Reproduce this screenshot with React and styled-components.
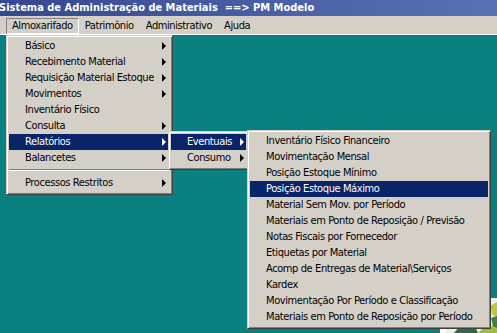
import React from 'react';
import styled, { createGlobalStyle } from 'styled-components';

const GlobalStyle = createGlobalStyle`
  html, body { margin: 0; padding: 0; background: #0b8080; overflow: hidden; }
  * { box-sizing: border-box; }
`;

const FONT = `"DejaVu Sans Condensed", "DejaVu Sans", "Liberation Sans", sans-serif`;

const Screen = styled.div`
  position: relative;
  width: 497px;
  height: 333px;
  background: #0b8080;
  overflow: hidden;
  font-family: ${FONT};
  font-size: 11px;
  letter-spacing: -0.4px;
  color: #000;
`;

const TitleBar = styled.div`
  height: 16px;
  background: linear-gradient(90deg, #33488f 0%, #4a60a6 55%, #5a71b4 100%);
  color: #fff;
  font-weight: bold;
  font-size: 11px;
  letter-spacing: 0;
  line-height: 16px;
  white-space: nowrap;
  text-indent: -1px;
`;

const MenuBar = styled.div`
  height: 19px;
  background: #d4d0c8;
  border-bottom: 1px solid #fff;
  display: flex;
  align-items: flex-end;
  padding-left: 6px;
`;

const MenuTitle = styled.div`
  height: 16px;
  line-height: 14px;
  padding: 0 5px;
  border: 1px solid transparent;
  ${p => p.$pressed && `
    border-color: #808080 #fff #fff #808080;
  `}
`;

const Dropdown = styled.div`
  position: absolute;
  top: ${p => p.$top}px;
  left: ${p => p.$left}px;
  width: ${p => p.$width}px;
  background: #d4d0c8;
  border: 1px solid;
  border-color: #d4d0c8 #404040 #404040 #d4d0c8;
  box-shadow: inset 1px 1px 0 #fff, inset -1px -1px 0 #808080;
  padding: 2px 2px 3px;
  z-index: ${p => p.$z || 1};
`;

const Item = styled.div`
  height: 16px;
  line-height: 16px;
  padding-left: ${p => p.$indent || 16}px;
  padding-right: ${p => p.$right || 4}px;
  display: flex;
  align-items: center;
  justify-content: space-between;
  white-space: nowrap;
  background: ${p => (p.$active ? '#0a246a' : 'transparent')};
  color: ${p => (p.$active ? '#fff' : '#000')};
`;

const Arrow = styled.span`
  width: 0;
  height: 0;
  border-top: 4px solid transparent;
  border-bottom: 4px solid transparent;
  border-left: 4px solid ${p => (p.$active ? '#fff' : '#000')};
`;

const Separator = styled.div`
  height: 2px;
  margin: 3px 0 4px;
  border-top: 1px solid #808080;
  border-bottom: 1px solid #fff;
`;

const Wallpaper = styled.svg`
  position: absolute;
  left: 438px;
  top: 298px;
`;

const mainItems = [
  { label: 'Básico', sub: true },
  { label: 'Recebimento Material', sub: true },
  { label: 'Requisição Material Estoque', sub: true },
  { label: 'Movimentos', sub: true },
  { label: 'Inventário Físico' },
  { label: 'Consulta', sub: true },
  { label: 'Relatórios', sub: true, active: true },
  { label: 'Balancetes', sub: true },
];

const reportItems = [
  'Inventário Físico Financeiro',
  'Movimentação Mensal',
  'Posição Estoque Mínimo',
  'Posição Estoque Máximo',
  'Material Sem Mov. por Período',
  'Materiais em Ponto de Reposição / Previsão',
  'Notas Fiscais por Fornecedor',
  'Etiquetas por Material',
  'Acomp de Entregas de Material\\Serviços',
  'Kardex',
  'Movimentação Por Período e Classificação',
  'Materiais em Ponto de Reposição por Período',
];

const App = () => {
  return (
    <Screen>
      <GlobalStyle />
      <TitleBar>Sistema de Administração de Materiais&nbsp;&nbsp;==&gt; PM Modelo</TitleBar>
      <MenuBar>
        <MenuTitle $pressed>Almoxarifado</MenuTitle>
        <MenuTitle>Patrimônio</MenuTitle>
        <MenuTitle>Administrativo</MenuTitle>
        <MenuTitle>Ajuda</MenuTitle>
      </MenuBar>

      {/* desktop picture peeking out under the menus */}
      <Wallpaper width="59" height="35" viewBox="0 0 59 35">
        <rect x="2" y="0" width="57" height="35" fill="#eef2e6" />
        <path d="M16 35 L22 28 L30 30 L36 26 L40 35 Z" fill="#2c6a4a" />
        <path d="M40 35 L46 29 L52 31 L56 24 L59 26 L59 35 Z" fill="#9cbf3a" />
        <path d="M52 8 L59 4 L59 20 L54 16 Z" fill="#b7c93c" />
        <path d="M53 20 L59 18 L59 30 L55 28 Z" fill="#3f7f3f" />
        <rect x="2" y="30" width="6" height="5" fill="#ffffff" />
      </Wallpaper>

      <Dropdown $top={35} $left={6} $width={167}>
        {mainItems.map(it => (
          <Item key={it.label} $active={it.active}>
            <span>{it.label}</span>
            {it.sub && <Arrow $active={it.active} />}
          </Item>
        ))}
        <Separator />
        <Item>
          <span>Processos Restritos</span>
          <Arrow />
        </Item>
      </Dropdown>

      <Dropdown $top={131} $left={168} $width={81} $z={2}>
        <Item $indent={16} $right={2} $active>
          <span>Eventuais</span>
          <Arrow $active />
        </Item>
        <Item $indent={16} $right={2}>
          <span>Consumo</span>
          <Arrow />
        </Item>
      </Dropdown>

      <Dropdown $top={130} $left={247} $width={244} $z={3}>
        {reportItems.map(label => (
          <Item key={label} $active={label === 'Posição Estoque Máximo'}>
            <span>{label}</span>
          </Item>
        ))}
      </Dropdown>
    </Screen>
  );
};

export default App;
